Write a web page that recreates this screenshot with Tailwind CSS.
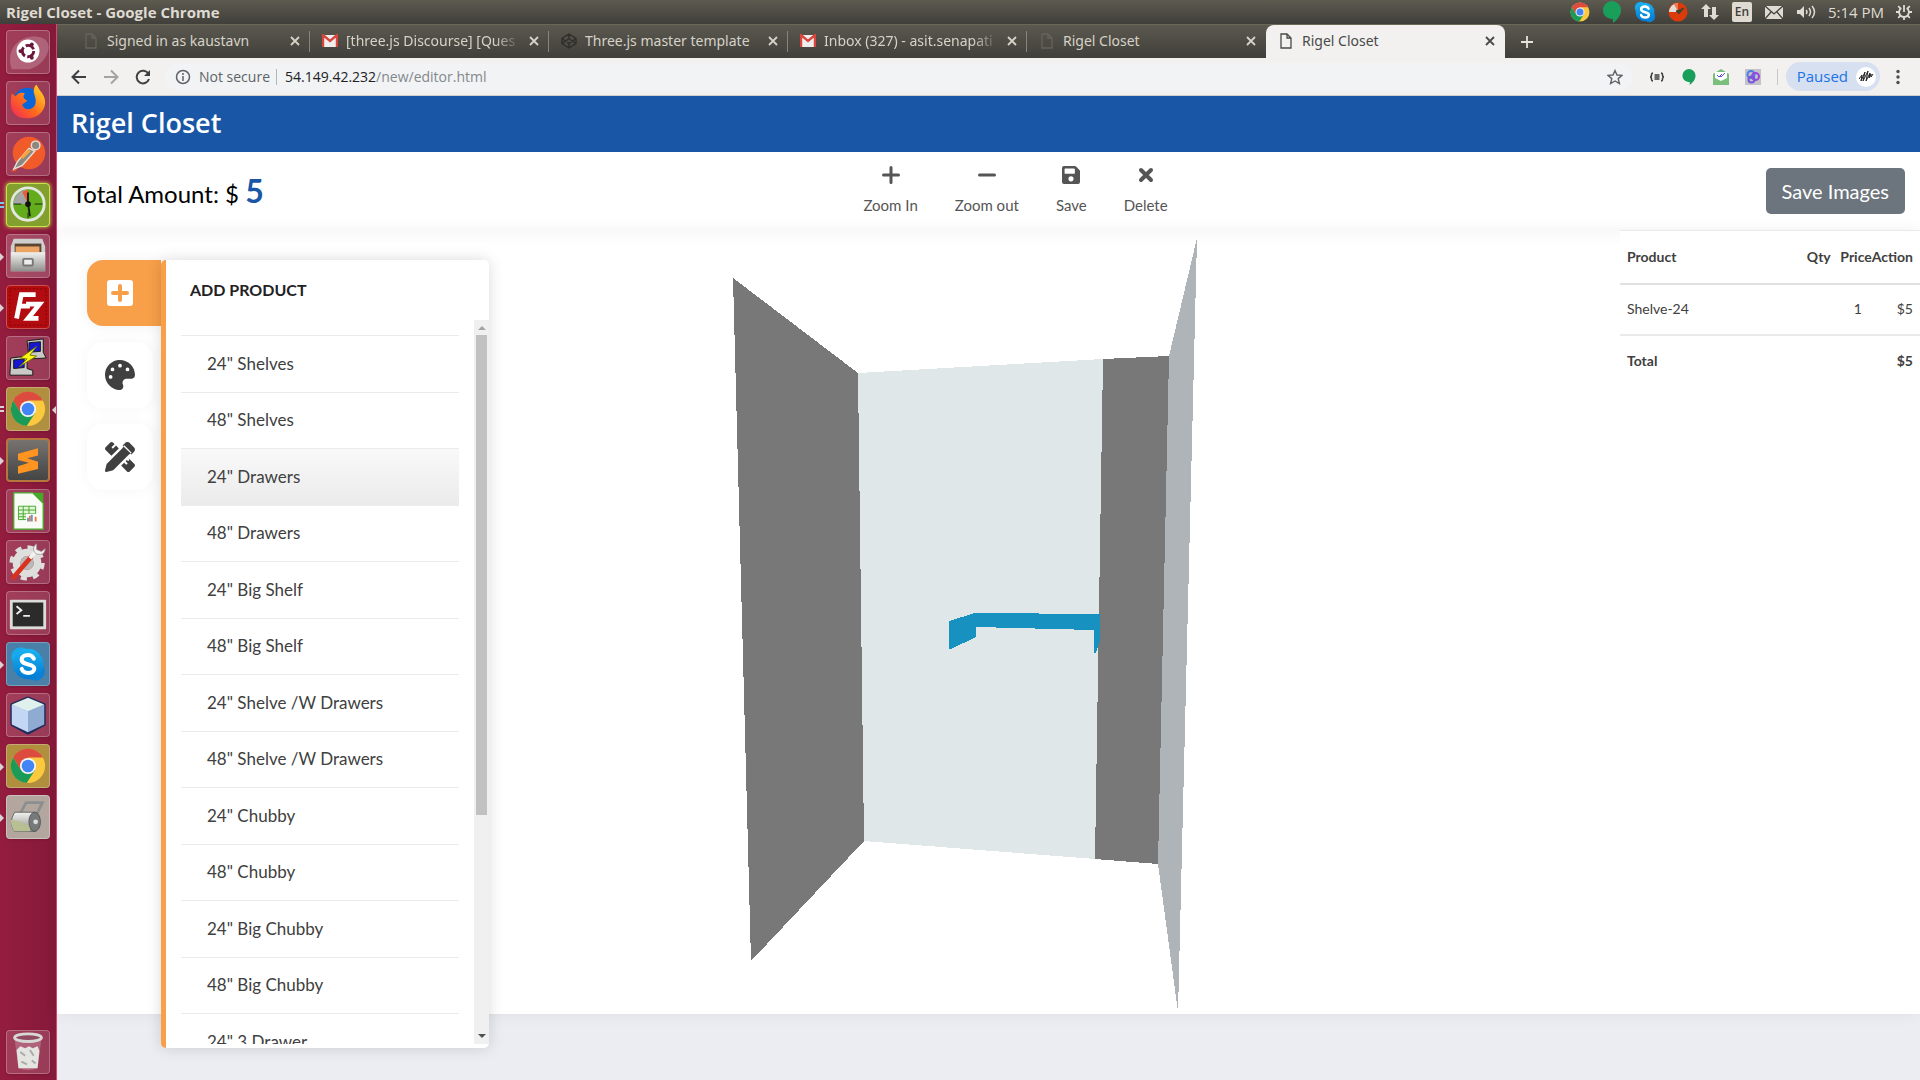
<!DOCTYPE html>
<html lang="en">
<head>
    <meta charset="UTF-8">
    <meta name="viewport" content="width=device-width, initial-scale=1.0">
    <title>Rigel Closet</title>
    <!-- Tailwind CSS CDN -->
    <script src="https://cdn.jsdelivr.net/npm/@tailwindcss/browser@4"></script>
</head>
<body class="h-screen overflow-hidden flex flex-col bg-[#ecedf2] font-['Lato',sans-serif] text-[#404040]">

    <!-- Shared gradients and symbols -->
    <svg class="absolute w-0 h-0" aria-hidden="true">
        <defs>
            <linearGradient id="skyBlue" x1="0" y1="0" x2="0" y2="1"><stop offset="0" stop-color="#1bb4f2"/><stop offset="1" stop-color="#0079d2"/></linearGradient>
            <linearGradient id="metal" x1="0" y1="0" x2="0" y2="1"><stop offset="0" stop-color="#f2f2f0"/><stop offset="1" stop-color="#8f8f8c"/></linearGradient>
            <linearGradient id="fire" x1="0" y1="1" x2="1" y2="0"><stop offset="0" stop-color="#f0245e"/><stop offset=".45" stop-color="#ff6a1c"/><stop offset="1" stop-color="#ffe226"/></linearGradient>
        </defs>
        <symbol id="chrome" viewBox="0 0 40 40">
            <circle cx="20" cy="20" r="19" fill="#fbc93d"/>
            <path d="M3.500 10.500A19 19 0 0 1 36.500 10.500H20L12 25Z" fill="#dd4b3e"/>
            <path d="M3.500 10.500A19 19 0 0 0 18.500 39L28 24.500 12 24.500Z" fill="#1a9b57"/>
            <circle cx="20" cy="20" r="9" fill="#f4f4f4"/>
            <circle cx="20" cy="20" r="7" fill="#4285f4"/>
        </symbol>
        <symbol id="skype" viewBox="0 0 40 40">
            <circle cx="12" cy="12" r="10.500" fill="#17abed"/>
            <circle cx="28" cy="28" r="10.500" fill="#0a80d6"/>
            <circle cx="20" cy="20" r="17" fill="url(#skyBlue)"/>
            <path d="M26.500 14c-1.500-3-4-4-6.500-4-4 0-7 1.800-7 5 0 7 14 4 14 10 0 3.500-3 5-6.500 5s-6.500-1.500-7.500-4.500" fill="none" stroke="#fff" stroke-width="4.500" stroke-linecap="round"/>
        </symbol>
        <symbol id="page" viewBox="0 0 12 16">
            <path d="M1 1h6l4 4v10H1zM7 1v4h4" fill="none" stroke="currentColor" stroke-width="1.300"/>
        </symbol>
        <symbol id="gmail" viewBox="0 0 16 14">
            <rect x="1" y="1" width="14" height="12" fill="#eee"/>
            <path d="M1 13V1l7 6 7-6v12" fill="none" stroke="#d9453c" stroke-width="2.400"/>
        </symbol>
        <symbol id="close" viewBox="0 0 10 10">
            <path d="M1 1l8 8M9 1l-8 8" stroke="currentColor" stroke-width="1.800"/>
        </symbol>
        <symbol id="hangouts" viewBox="0 0 18 22">
            <path d="M9 0a9 9 0 0 1 9 9c0 6-4.500 10.500-8 13v-4C4 18 0 14.500 0 9A9 9 0 0 1 9 0z" fill="#1a9f5b"/>
        </symbol>
    </svg>

    <!-- Desktop panel -->
    <header class="h-6 shrink-0 flex items-center justify-between pl-1.5 pr-2 bg-linear-to-b from-[#5d5a4f] to-[#403f3a] font-['Open_Sans',sans-serif] text-[15px] text-[#dfdbd2]">
        <div class="font-bold">Rigel Closet - Google Chrome</div>
        <div class="flex items-center gap-3">
            <svg class="w-5 h-5"><use href="#chrome"/></svg>
            <svg class="w-5 h-[22px]"><use href="#hangouts"/></svg>
            <svg class="w-[22px] h-[22px]"><use href="#skype"/></svg>
            <svg class="w-5 h-5" viewBox="0 0 20 20"><circle cx="10" cy="10" r="9.500" fill="#dd3a0c"/><path d="M10 10V1A9 9 0 0 0 1 10z" fill="#e4ddd6"/><path d="M10 10V1A9 9 0 0 0 6 2z" fill="#ee7a50"/><path d="M8 9l3 3 5-6-5 2z" fill="#443" stroke="#443"/></svg>
            <svg class="w-5 h-5" viewBox="0 0 20 20" fill="#dfdbd2"><path d="M6 2l5 5H8v8H4V7H1zM14 18l-5-5h3V5h4v8h3z"/></svg>
            <span class="w-5 h-5 flex items-center justify-center rounded-xs bg-[#dfdbd2] text-[#403f3a] text-xs font-semibold">En</span>
            <svg class="w-5 h-5" viewBox="0 0 20 20"><rect x="1" y="4" width="18" height="13" fill="#dfdbd2"/><path d="M1 4l9 8 9-8M1 17l6-7M19 17l-6-7" fill="none" stroke="#45433d" stroke-width="1.300"/></svg>
            <svg class="w-5 h-5" viewBox="0 0 20 20" fill="none" stroke="#dfdbd2" stroke-width="1.500"><path d="M1 8h3l4-4v12l-4-4H1z" fill="#dfdbd2" stroke="none"/><path d="M10 8q2 2 0 4M13 6q3 4 0 8M16 4q5 6 0 12"/></svg>
            <span>5:14 PM</span>
            <svg class="w-4 h-[18px]" viewBox="0 0 18 18" fill="none" stroke="#dfdbd2" stroke-width="2"><path d="M6 4.500a5.500 5.500 0 1 0 6 0"/><path d="M9 1v8M0 9h4M14 9h4M2.500 2.500l2.500 2.500M13 5l2.500-2.500M2.500 15.500L5 13M13 13l2.500 2.500M9 15v3"/></svg>
        </div>
    </header>

    <div class="flex-1 min-h-0 flex">
        <!-- Launcher -->
        <nav aria-label="Launcher" class="w-[57px] shrink-0 flex flex-col justify-between items-center py-1.5 border-r border-[#d8476f] bg-linear-to-r from-[#941d3e] to-[#85193a]">
            <ul class="w-full flex flex-col items-center gap-[7px]">
                <li class="w-11 h-11 rounded-sm border border-white/25 bg-white/15 shadow">
                    <svg viewBox="0 0 44 44"><path d="M5 40C-2 20 12 4 32 6S44 34 24 40" fill="#fff" opacity=".2"/><circle cx="22" cy="21" r="12" fill="#fff"/><circle cx="22" cy="21" r="6" fill="none" stroke="#6b173b" stroke-width="3" stroke-dasharray="10 2.500"/><g fill="#6b173b"><circle cx="14" cy="21" r="2"/><circle cx="26" cy="14" r="2"/><circle cx="26" cy="28" r="2"/></g></svg>
                </li>
                <li class="w-11 h-11 rounded-sm border border-white/25 bg-white/15 shadow">
                    <svg viewBox="0 0 44 44"><circle cx="21" cy="20" r="14" fill="#0a66d8"/><path d="M5 12l4 3c3-5 8-4 10-3-3 2-2 6 2 7-1 3-5 3-5 5 2 6 10 6 13 1 3-6-1-12-1-15 0-3 1-6 3-7 3 7 9 10 9 19-1 10-9 16-18 16C11 39 4 32 4 23c0-4 0-7 1-11z" fill="url(#fire)"/></svg>
                </li>
                <li class="w-11 h-11 rounded-sm border border-white/25 bg-white/15 shadow">
                    <svg viewBox="0 0 44 44"><circle cx="23" cy="21" r="17" fill="#f15a29"/><path d="M7 38l4-8 12-14 6 3-13 15z" fill="#8c8880" stroke="#e7e1d8" stroke-width="1.500"/><path d="M14 26l8-9 3 2-8 8z" fill="#f9a13a"/><circle cx="30" cy="13" r="4.500" fill="#8c8880" stroke="#e7e1d8" stroke-width="1.500"/><path d="M4 40l7-3-2 3z" fill="#f15a29"/></svg>
                </li>
                <li class="relative w-11 h-11 rounded-sm border border-[#c9e24d] bg-[#83a02f] shadow-[0_0_4px_#c9e24d]">
                    <svg viewBox="0 0 44 44"><circle cx="22" cy="21" r="17" fill="#63ad1c" stroke="#e4e6e0" stroke-width="3"/><path d="M22 21V6A15 15 0 0 0 7 21z" fill="#a4a7a6"/><path d="M22 21V6l-6 2z" fill="#ee5a35"/><path d="M22 9v10M22 20l2 14" stroke="#17230d" stroke-width="2"/><path d="M7 21h8M29 21h8M22 30v6" stroke="#17230d"/><circle cx="22" cy="21" r="3" fill="#111"/></svg>
                    <span class="absolute -left-[7px] top-[18px] w-1 h-1.5 border-y-2 border-[#7fc8e8]"></span>
                </li>
                <li class="relative w-11 h-11 rounded-sm border border-white/25 bg-white/20 shadow">
                    <svg viewBox="0 0 44 44"><path d="M7 4h30l3 8v26H4V12z" fill="#cfcfcd"/><path d="M8 9h28v9H8z" fill="#5a4632"/><path d="M9 12h25v7H9z" fill="#eda565"/><path d="M4 18h36v20H4z" fill="url(#metal)"/><rect x="17" y="25" width="10" height="7" rx="1" fill="#eee" stroke="#777" stroke-width="2"/></svg>
                    <span class="absolute -left-[7px] top-[18px] border-y-4 border-l-4 border-y-transparent border-l-[#d9d3d5]"></span>
                </li>
                <li class="relative w-11 h-11 rounded-sm border border-[#ce5350] bg-[#b20c10] shadow">
                    <svg viewBox="0 0 44 44"><rect x="3" y="3" width="38" height="38" fill="none" stroke="#7e0205" stroke-dasharray="2 2"/><path d="M10 34l5-25h15M12 21h12M20 19h14L22 34h11" fill="none" stroke="#fff" stroke-width="5"/></svg>
                    <span class="absolute -left-[7px] top-[18px] border-y-4 border-l-4 border-y-transparent border-l-[#d9d3d5]"></span>
                </li>
                <li class="w-11 h-11 rounded-sm border border-white/25 bg-white/15 shadow">
                    <svg viewBox="0 0 44 44" stroke="#171717"><path d="M21 4l17-2v14l3 6-18 1z" fill="#c9c9c5"/><path d="M23 6l12-1v10l-12 1z" fill="#1717cf"/><path d="M4 22l17-2v13l6 2v5H3z" fill="#c9c9c5"/><path d="M7 24l11-1v9L7 33z" fill="#1717cf"/><path d="M31 10L14 22l7 1-8 8 18-11-7-1z" fill="#fbf614" stroke="#777a00"/></svg>
                </li>
                <li class="relative w-11 h-11 rounded-sm border border-white/25 bg-[#b08f3f] shadow p-[3px]">
                    <svg class="w-9 h-9"><use href="#chrome"/></svg>
                    <span class="absolute -left-[7px] top-[18px] w-1 h-1.5 border-y-2 border-[#d9d3d5]"></span>
                    <span class="absolute -right-[7px] top-[18px] border-y-4 border-r-4 border-y-transparent border-r-[#d9d3d5]"></span>
                </li>
                <li class="relative w-11 h-11 rounded-sm border-2 border-[#b8763f] bg-linear-to-b from-[#77736f] to-[#454545] shadow">
                    <svg viewBox="0 0 44 44"><path d="M11 15l22-6v8l-12 3 12 4v8l-22 5v-8l12-4-12-3z" fill="#ff9420"/></svg>
                    <span class="absolute -left-2 top-[17px] border-y-4 border-l-4 border-y-transparent border-l-[#d9d3d5]"></span>
                </li>
                <li class="w-11 h-11 rounded-sm border border-white/25 bg-white/15 shadow">
                    <svg viewBox="0 0 44 44"><path d="M7 3h20l11 11v27H7z" fill="#f8fbf6" stroke="#46a928" stroke-width="1.500"/><path d="M27 3h11v11z" fill="#46a928"/><path d="M12 17h18v14H12zM12 21h18M12 25h18M12 28h18M17 17v14M23 17v14" fill="#e2f5da" stroke="#46a928"/><path d="M20 25h12v8H20z" fill="#fff"/><path d="M22 33v-4M26 33v-7" stroke="#5a9bd0" stroke-width="2"/><path d="M24 33v-6M30 33v-5" stroke="#ef7844" stroke-width="2"/></svg>
                </li>
                <li class="w-11 h-11 rounded-sm border border-white/25 bg-white/15 shadow">
                    <svg viewBox="0 0 44 44"><circle cx="21" cy="23" r="11" fill="none" stroke="#dededc" stroke-width="8"/><circle cx="21" cy="23" r="16.500" fill="none" stroke="#dededc" stroke-width="4" stroke-dasharray="6.500 6.460"/><circle cx="21" cy="23" r="7" fill="#b9b9b7"/><path d="M7 38l18-21" stroke="#d8321f" stroke-width="5" stroke-linecap="round"/><path d="M24 18l6-7" stroke="#f2f2f0" stroke-width="4"/><path d="M31 3c-6 4-3 12 4 11 3 0 5-3 5-6l-4 3-5-2z" fill="#f2f2f0" stroke="#999" stroke-width=".8"/></svg>
                </li>
                <li class="w-11 h-11 rounded-sm border border-white/25 bg-white/15 shadow">
                    <svg viewBox="0 0 44 44"><rect x="3" y="8" width="38" height="31" rx="1" fill="#dcdcda"/><rect x="6" y="11" width="32" height="25" fill="#2b2b2b"/><path d="M10 15l5 4-5 4M17 25h7" fill="none" stroke="#eee" stroke-width="2"/></svg>
                </li>
                <li class="relative w-11 h-11 rounded-sm border border-white/25 bg-[#4a7fa8] shadow p-[3px]">
                    <svg class="w-9 h-9"><use href="#skype"/></svg>
                    <span class="absolute -left-[7px] top-[18px] border-y-4 border-l-4 border-y-transparent border-l-[#d9d3d5]"></span>
                </li>
                <li class="w-11 h-11 rounded-sm border border-white/25 bg-white/15 shadow">
                    <svg viewBox="0 0 44 44" stroke="#202b5c" stroke-width="3" stroke-linejoin="round"><path d="M22 4l17 7v21l-17 9-17-9V11z" fill="#a9c1e6"/><path d="M22 4l17 7-17 7-17-7z" fill="#e0f0ec" stroke="none"/><path d="M5 11l17 7v22L5 32z" fill="#c3d6f3" stroke="none"/><path d="M39 11l-17 7v22l17-8z" fill="#8fabd2" stroke="none"/></svg>
                </li>
                <li class="relative w-11 h-11 rounded-sm border border-white/25 bg-[#b08f3f] shadow p-[3px]">
                    <svg class="w-9 h-9"><use href="#chrome"/></svg>
                    <span class="absolute -left-[7px] top-[18px] border-y-4 border-l-4 border-y-transparent border-l-[#d9d3d5]"></span>
                </li>
                <li class="relative w-11 h-11 rounded-sm border border-white/30 bg-[#b3a69e] shadow">
                    <svg viewBox="0 0 44 44"><path d="M14 18l6-11h17l-8 17" fill="none" stroke="#8c8f8f" stroke-width="3"/><path d="M8 17h22v20H8q-7-9 0-20z" fill="url(#metal)" stroke="#666"/><path d="M4 25l12 2 2 3h6v7H8q-4-4-4-12z" fill="#b7bf93"/><ellipse cx="29" cy="27" rx="6" ry="10" fill="#777a7a" stroke="#555"/><circle cx="30" cy="27" r="2.500" fill="#ddd"/></svg>
                    <span class="absolute -left-[7px] top-[18px] border-y-4 border-l-4 border-y-transparent border-l-[#d9d3d5]"></span>
                </li>
            </ul>
            <div class="w-11 h-11 rounded-sm border border-white/25 bg-white/15 shadow">
                <svg viewBox="0 0 44 44"><path d="M8 9l4 30q10 4 20 0l4-30z" fill="#fff" opacity=".2"/><path d="M10 20l4-4 5 2 4-2 4 2 5-2 2 5-2 18H12z" fill="#e4e4e0"/><path d="M14 22l5 4M24 20l4 6M15 32l6 3M26 31l4 3" stroke="#aaa" stroke-width="2"/><ellipse cx="22" cy="7" rx="14" ry="4" fill="#8f4a62" stroke="#d8d8d4" stroke-width="3"/></svg>
            </div>
        </nav>

        <!-- Browser window -->
        <div class="flex-1 min-w-0 flex flex-col">
            <!-- Tab strip -->
            <div class="h-[34px] shrink-0 flex items-stretch pl-3.5 border-t border-[#6b6858] bg-linear-to-b from-[#5b594f] to-[#403f3a] font-['Noto_Sans',sans-serif] text-sm text-[#d6d2c8]">
                <div class="w-[239px] flex items-center gap-2.5 pl-3.5 pr-2.5 pb-0.5">
                    <svg class="w-3 h-4 shrink-0 text-[#65635a]"><use href="#page"/></svg>
                    <span class="flex-1 overflow-hidden whitespace-nowrap">Signed in as kaustavn</span>
                    <button type="button" aria-label="Close tab"><svg class="w-2.5 h-2.5"><use href="#close"/></svg></button>
                </div>
                <span class="w-px my-1.5 -ml-px bg-[#86847b]"></span>
                <div class="w-[239px] flex items-center gap-2 pl-3 pr-2.5 pb-0.5">
                    <svg class="w-4 h-3.5 shrink-0"><use href="#gmail"/></svg>
                    <span class="flex-1 overflow-hidden whitespace-nowrap mask-r-from-85%">[three.js Discourse] [Ques</span>
                    <button type="button" aria-label="Close tab"><svg class="w-2.5 h-2.5"><use href="#close"/></svg></button>
                </div>
                <span class="w-px my-1.5 -ml-px bg-[#86847b]"></span>
                <div class="w-[239px] flex items-center gap-2 pl-3 pr-2.5 pb-0.5">
                    <svg class="w-4 h-4 shrink-0" viewBox="0 0 16 16" fill="none" stroke="#2f2e2a" stroke-width="1.400"><path d="M8 1l7 4.500v5L8 15l-7-4.500v-5zM1 5.500l7 5 7-5M1 10.500l7-5 7 5M8 1v4.500M8 10.500V15"/></svg>
                    <span class="flex-1 overflow-hidden whitespace-nowrap">Three.js master template</span>
                    <button type="button" aria-label="Close tab"><svg class="w-2.5 h-2.5"><use href="#close"/></svg></button>
                </div>
                <span class="w-px my-1.5 -ml-px bg-[#86847b]"></span>
                <div class="w-[239px] flex items-center gap-2 pl-3 pr-2.5 pb-0.5">
                    <svg class="w-4 h-3.5 shrink-0"><use href="#gmail"/></svg>
                    <span class="flex-1 overflow-hidden whitespace-nowrap mask-r-from-85%">Inbox (327) - asit.senapati</span>
                    <button type="button" aria-label="Close tab"><svg class="w-2.5 h-2.5"><use href="#close"/></svg></button>
                </div>
                <span class="w-px my-1.5 -ml-px bg-[#86847b]"></span>
                <div class="w-[239px] flex items-center gap-2.5 pl-3.5 pr-2.5 pb-0.5">
                    <svg class="w-3 h-4 shrink-0 text-[#65635a]"><use href="#page"/></svg>
                    <span class="flex-1 overflow-hidden whitespace-nowrap">Rigel Closet</span>
                    <button type="button" aria-label="Close tab"><svg class="w-2.5 h-2.5"><use href="#close"/></svg></button>
                </div>
                <div class="w-[239px] flex items-center gap-2.5 pl-3.5 pr-2.5 pb-0.5 rounded-t-lg bg-[#f2f1f0] text-[#4a4a4a]">
                    <svg class="w-3 h-4 shrink-0"><use href="#page"/></svg>
                    <span class="flex-1 overflow-hidden whitespace-nowrap">Rigel Closet</span>
                    <button type="button" aria-label="Close tab"><svg class="w-2.5 h-2.5"><use href="#close"/></svg></button>
                </div>
                <button type="button" aria-label="New tab" class="pl-4"><svg class="w-3 h-3" viewBox="0 0 12 12"><path d="M6 0v12M0 6h12" stroke="#e6e3da" stroke-width="1.800"/></svg></button>
            </div>

            <!-- Address bar -->
            <div class="h-[38px] shrink-0 flex items-center pl-3.5 pr-3.5 border-b border-[#d0cfce] bg-[#f2f1f0] font-['Open_Sans',sans-serif] text-sm text-[#5f6368]">
                <div class="flex items-center gap-4">
                    <button type="button" aria-label="Back"><svg class="w-4 h-4" viewBox="0 0 16 16" fill="none" stroke="#3c4043" stroke-width="2"><path d="M15 8H2M8 1.500L1.500 8 8 14.500"/></svg></button>
                    <button type="button" aria-label="Forward"><svg class="w-4 h-4" viewBox="0 0 16 16" fill="none" stroke="#a3a3a3" stroke-width="2"><path d="M1 8h13M8 1.500L14.500 8 8 14.500"/></svg></button>
                    <button type="button" aria-label="Reload"><svg class="w-4 h-4" viewBox="0 0 16 16" fill="none" stroke="#3c4043" stroke-width="2"><path d="M13.500 5A6.300 6.300 0 1 0 14 10"/><path d="M15 1v6H9z" fill="#3c4043" stroke="none"/></svg></button>
                </div>
                <div class="flex-1 h-7 ml-3.5 mr-4 pl-2.5 pr-2.5 flex items-center rounded-full bg-[#f1f3f4]">
                    <svg class="w-4 h-4 mr-2" viewBox="0 0 16 16" fill="none" stroke="#5f6368" stroke-width="1.500"><circle cx="8" cy="8" r="6.500"/><path d="M8 7v5M8 4v2"/></svg>
                    <span>Not secure</span>
                    <span class="w-px h-4 ml-1.5 mr-2 bg-[#b5b8bb]"></span>
                    <span class="flex-1 text-[#84888c]"><span class="text-[#202124]">54.149.42.232</span>/new/editor.html</span>
                    <svg class="w-4 h-4" viewBox="0 0 16 16" fill="none" stroke="#5f6368" stroke-width="1.400"><path d="M8 1.500l2 4.500 5 .4-3.800 3.200 1.200 4.900L8 12l-4.400 2.500 1.200-4.900L1 6.400 6 6z"/></svg>
                </div>
                <div class="flex items-center gap-4">
                    <svg class="w-4 h-4" viewBox="0 0 16 16" fill="none" stroke="#3c3c3c" stroke-width="1.500"><path d="M4 4Q2.500 4 2.500 6T1 8q1.500 0 1.500 2T4 12M12 4q1.500 0 1.500 2T15 8q-1.500 0-1.500 2T12 12M5.500 6h5M5.500 8h5M5.500 10h5"/></svg>
                    <svg class="w-4 h-4"><use href="#hangouts"/></svg>
                    <svg class="w-4 h-4" viewBox="0 0 16 16"><path d="M0 5l8-5 8 5v11H0z" fill="#7abf7c"/><path d="M2 3h12v6l-6 3-6-3z" fill="#fff"/><path d="M4 6l2 2 3-3M7 7l1 1 4-4" fill="none" stroke="#5a4fcf"/></svg>
                    <svg class="w-4 h-4" viewBox="0 0 16 16" fill="none"><path d="M0 0h16v16H0z" fill="#c4c3c9"/><circle cx="6" cy="5.500" r="3.500" stroke="#4a7fe6" stroke-width="2"/><circle cx="10.500" cy="7.500" r="3.500" stroke="#9b45dc" stroke-width="2"/><circle cx="6.500" cy="10.500" r="3" stroke="#7757dd" stroke-width="2"/></svg>
                    <span class="w-px h-4 bg-[#c8c8c8]"></span>
                </div>
                <button type="button" class="h-[29px] ml-2 mr-2.5 pl-[11px] pr-1 flex items-center gap-2 rounded-full bg-[#d6e0f0] text-[15px] text-[#1a73e8]">
                    Paused
                    <svg class="w-5 h-5" viewBox="0 0 20 20"><circle cx="10" cy="10" r="10" fill="#fff"/><path d="M3 12l3-4-1 6 4-9-2 9 5-10-2 10 4-8-1 5 2-4 0 3 2-3" fill="none" stroke="#222"/></svg>
                </button>
                <button type="button" aria-label="Menu"><svg class="w-4 h-4" viewBox="0 0 16 16" fill="#4a4d50"><circle cx="8" cy="2.500" r="1.700"/><circle cx="8" cy="8" r="1.700"/><circle cx="8" cy="13.500" r="1.700"/></svg></button>
            </div>

            <!-- App header -->
            <div class="h-14 shrink-0 flex items-center pl-3.5 pb-0.5 bg-[#1957a6]">
                <h1 class="font-['Open_Sans',sans-serif] font-semibold text-[27px] leading-9 text-white">Rigel Closet</h1>
            </div>

            <!-- Toolbar -->
            <div class="h-[78px] shrink-0 grid grid-cols-[1fr_auto_1fr] items-center pl-[15px] pr-[15px] bg-white">
                <p class="text-2xl text-black">Total Amount: $ <strong class="text-[32px] text-[#1957a6]">5</strong></p>
                <div class="flex gap-[37px] pl-[54px] text-[15px] leading-6 text-[#555]">
                    <button type="button" class="flex flex-col items-center gap-[9px]">
                        <svg class="w-[18px] h-[18px]" viewBox="0 0 18 18"><path d="M9 1.500v15M1.500 9h15" stroke="#555" stroke-width="3" stroke-linecap="round"/></svg>
                        Zoom In
                    </button>
                    <button type="button" class="flex flex-col items-center gap-[9px]">
                        <svg class="w-[18px] h-[18px]" viewBox="0 0 18 18"><path d="M1.500 9h15" stroke="#555" stroke-width="3" stroke-linecap="round"/></svg>
                        Zoom out
                    </button>
                    <button type="button" class="flex flex-col items-center gap-[9px]">
                        <svg class="w-[18px] h-[18px]" viewBox="0 0 448 448"><path fill="#555" fill-rule="evenodd" d="M434 98L350 14A48 48 0 0 0 316 0H48A48 48 0 0 0 0 48v352a48 48 0 0 0 48 48h352a48 48 0 0 0 48-48V132a48 48 0 0 0-14-34zM224 384a64 64 0 1 1 0-128 64 64 0 0 1 0 128zM320 79v101a12 12 0 0 1-12 12H76a12 12 0 0 1-12-12V76a12 12 0 0 1 12-12h229z"/></svg>
                        Save
                    </button>
                    <button type="button" class="flex flex-col items-center gap-[9px]">
                        <svg class="w-[18px] h-[18px]" viewBox="0 0 18 18"><path d="M4 4l10 10M14 4L4 14" stroke="#555" stroke-width="4" stroke-linecap="round"/></svg>
                        Delete
                    </button>
                </div>
                <button type="button" class="justify-self-end h-[46px] px-4 rounded-[5px] bg-[#6c757d] text-xl text-white">Save Images</button>
            </div>

            <!-- Editor -->
            <main class="flex-1 min-h-0 grid grid-cols-1 grid-rows-[minmax(0,1fr)] mb-[66px] bg-white shadow-[0_0_15px_rgba(0,0,0,0.06)]">
                <!-- Closet scene -->
                <svg class="col-start-1 row-start-1 w-full h-full bg-linear-to-b from-[#f9f9f9] to-white to-[16px]" viewBox="57 230 1863 784" shape-rendering="crispEdges">
                    <polygon points="733,278 858,373 864,841 751,961" fill="#787878"/>
                    <polygon points="858,373 1103,359 1095,859 864,841" fill="#dfe7e8"/>
                    <polygon points="1103,359 1169,356 1158,864 1095,859" fill="#787878"/>
                    <polygon points="1197,238 1169,356 1158,864 1178,1012" fill="#aeb4b7"/>
                    <polygon points="949,621 975,613 1100,614 1100,640 1096,653 1094,653 1094,630 976,627 976,637 951,649 949,649" fill="#1791c0"/>
                </svg>

                <!-- Product picker -->
                <div class="col-start-1 row-start-1 justify-self-start z-10 flex items-start ml-[30px] mt-[30px] -mb-[34px]">
                    <div class="flex flex-col items-start gap-4">
                        <button type="button" aria-label="Add product" class="w-[74px] h-[66px] pl-5 rounded-l-2xl bg-[#f79f49] shadow-[0_0_15px_rgba(0,0,0,0.06)]">
                            <svg class="w-[26px] h-[26px]" viewBox="0 0 26 26"><rect width="26" height="26" rx="3" fill="#fff"/><path d="M13 6v14M6 13h14" stroke="#f79f49" stroke-width="4" stroke-linecap="round"/></svg>
                        </button>
                        <button type="button" aria-label="Materials" class="w-[66px] h-[66px] flex items-center justify-center rounded-2xl bg-white shadow-[0_0_15px_rgba(0,0,0,0.04)]">
                            <svg class="w-[30px] h-[30px]" viewBox="0 0 512 512"><path fill="#404040" fill-rule="evenodd" d="M204 5C105 24 25 104 5 203c-37 188 131 327 258 307 41-6 61-54 43-92-23-46 11-99 62-99h80c35 0 64-29 64-64C511 95 365-26 204 5zM96 320a32 32 0 1 1 0-64 32 32 0 0 1 0 64zm32-128a32 32 0 1 1 0-64 32 32 0 0 1 0 64zm128-64a32 32 0 1 1 0-64 32 32 0 0 1 0 64zm128 64a32 32 0 1 1 0-64 32 32 0 0 1 0 64z"/></svg>
                        </button>
                        <button type="button" aria-label="Dimensions" class="w-[66px] h-[66px] flex items-center justify-center rounded-2xl bg-white shadow-[0_0_15px_rgba(0,0,0,0.04)]">
                            <svg class="w-[30px] h-[30px]" viewBox="0 0 512 512" fill="#404040"><path d="M109 236L10 137c-13-13-13-34 0-47L90 10c13-13 34-13 47 0l27 27-46 46c-5 5-5 11 0 16l8 8c5 5 11 5 16 0l46-46 48 48zM403 276l99 99c13 13 13 34 0 47l-80 80c-13 13-34 13-47 0L276 403l51-51 30 30c5 5 11 5 16 0l8-8c5-5 5-11 0-16l-30-30 22-22 15 15c5 5 11 5 16 0l8-8c5-5 5-11 0-16zM497 94c20 20 20 51 0 71l-47 47-110-110-40-41 47-47c20-20 51-20 71 0zM318 84L28 374 0 488c-3 16 10 27 24 24l116-28 290-290z"/><path d="M318 84l-18 18 110 110 18-18z"/><path d="M321 63l127 127" stroke="#fff" stroke-width="22"/></svg>
                        </button>
                    </div>
                    <section class="w-[328px] h-full flex flex-col pb-1 rounded-[5px] border-l-[5px] border-[#f79f49] bg-white shadow-[0_0_15px_rgba(0,0,0,0.15)]">
                        <h2 class="h-[60px] shrink-0 pt-[18px] pl-6 text-base font-bold text-[#222]">ADD PRODUCT</h2>
                        <div class="flex-1 min-h-0 flex">
                            <ul class="flex-1 h-full overflow-hidden pt-[15px] pl-[15px] pr-[15px] text-[17px] [&>li]:h-[57px] [&>li:nth-child(even)]:h-14 [&>li]:flex [&>li]:items-center [&>li]:pl-[26px] [&>li:nth-child(even)]:pb-px [&>li]:border-t [&>li]:border-[#ebebeb]">
                                <li>24" Shelves</li>
                                <li>48" Shelves</li>
                                <li class="bg-linear-to-b from-[#f9f9f9] to-[#ebebeb]">24" Drawers</li>
                                <li>48" Drawers</li>
                                <li>24" Big Shelf</li>
                                <li>48" Big Shelf</li>
                                <li>24" Shelve /W Drawers</li>
                                <li>48" Shelve /W Drawers</li>
                                <li>24" Chubby</li>
                                <li>48" Chubby</li>
                                <li>24" Big Chubby</li>
                                <li>48" Big Chubby</li>
                                <li>24" 3 Drawer</li>
                            </ul>
                            <!-- Scrollbar -->
                            <div class="w-[15px] flex flex-col items-center justify-between py-1.5 bg-[#f0f0f0]">
                                <span class="border-x-4 border-b-4 border-x-transparent border-b-[#a3a3a3]"></span>
                                <span class="w-[11px] flex-1 mt-[5px] mb-[219px] bg-[#c1c1c1]"></span>
                                <span class="border-x-4 border-t-4 border-x-transparent border-t-[#505050]"></span>
                            </div>
                        </div>
                    </section>
                </div>

                <!-- Order summary -->
                <table class="col-start-1 row-start-1 justify-self-end self-start w-[300px] bg-white border-t border-[#eaeaea] text-sm">
                    <thead>
                        <tr class="h-[53px] border-b-2 border-[#dfe1e3]">
                            <th scope="col" class="pl-[7px] text-left">Product</th>
                            <th scope="col" class="w-14 text-right">Qty</th>
                            <th scope="col" class="w-[41px] text-right">Price</th>
                            <th scope="col" class="w-12 pr-[7px] text-right">Action</th>
                        </tr>
                    </thead>
                    <tbody>
                        <tr class="h-[51px] border-b-2 border-[#e9eaeb]">
                            <td class="pl-[7px]">Shelve-24</td>
                            <td></td>
                            <td class="pr-2.5 text-right">1</td>
                            <td class="pr-[7px] text-right">$5</td>
                        </tr>
                        <tr class="h-[52px] font-bold">
                            <td class="pl-[7px]">Total</td>
                            <td></td>
                            <td></td>
                            <td class="pr-[7px] text-right">$5</td>
                        </tr>
                    </tbody>
                </table>
            </main>
        </div>
    </div>
</body>
</html>
